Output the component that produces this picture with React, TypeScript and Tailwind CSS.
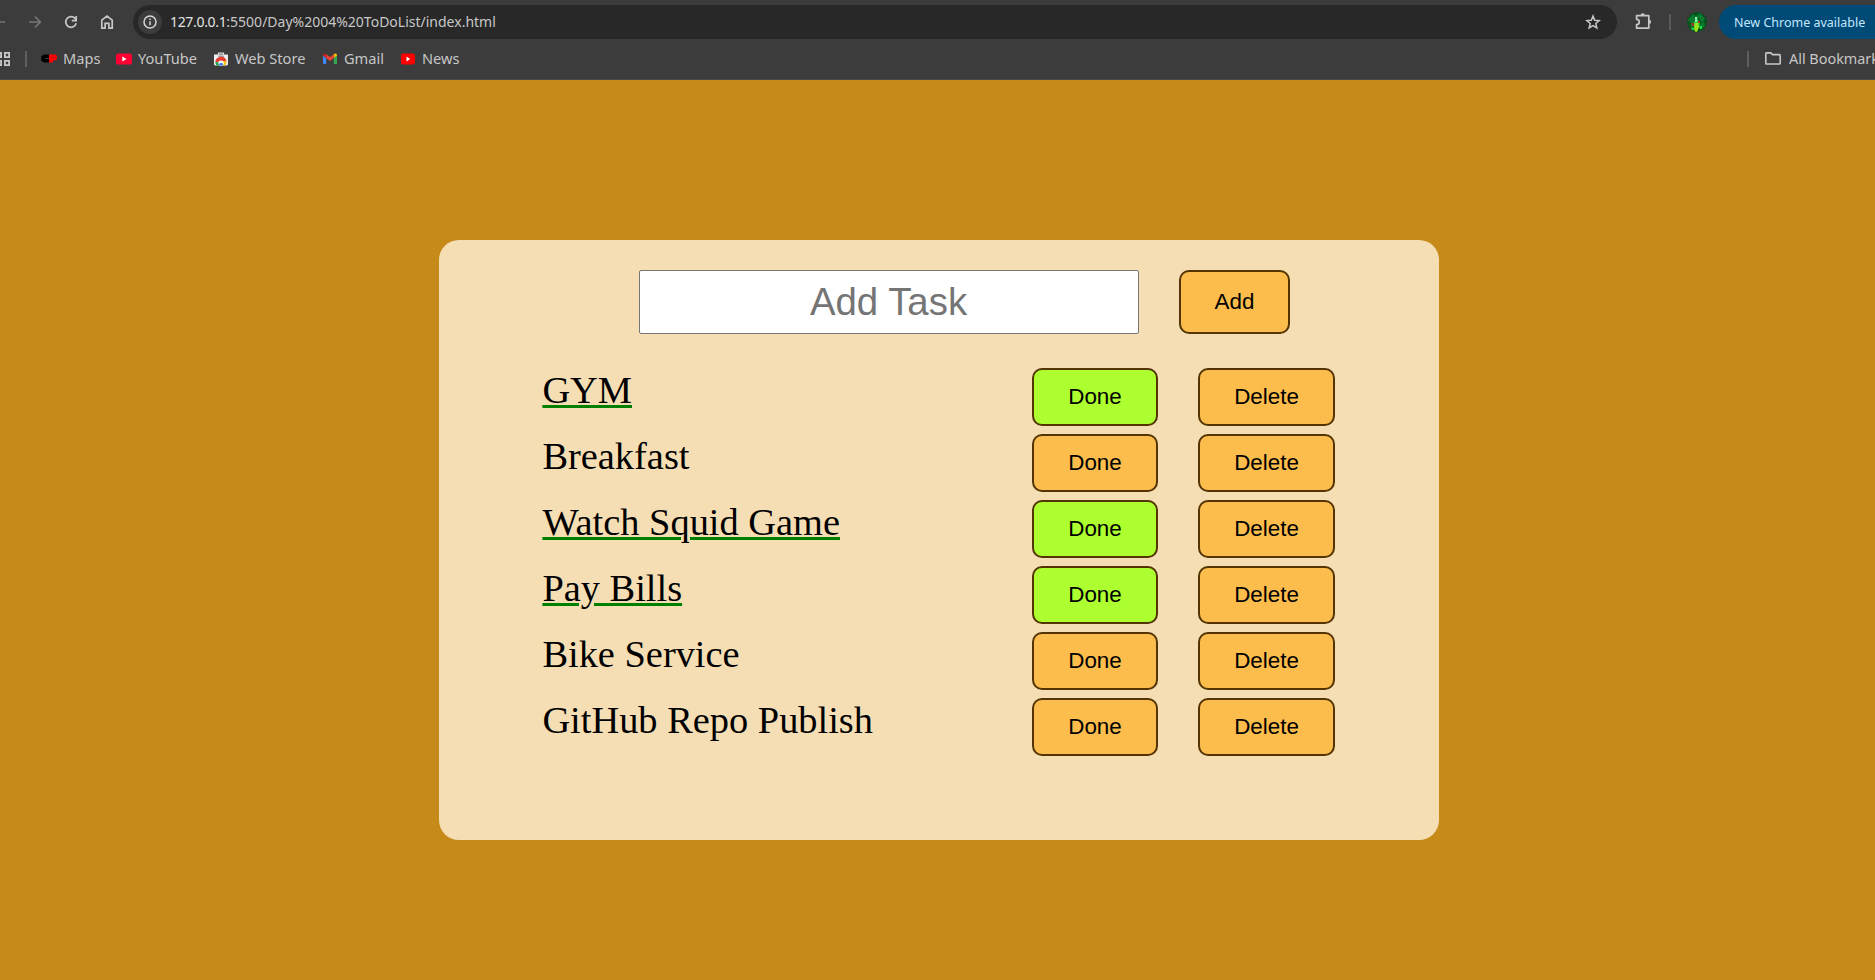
import type { ReactNode } from "react";

type Task = { title: string; done: boolean };

const tasks: Task[] = [
  { title: "GYM", done: true },
  { title: "Breakfast", done: false },
  { title: "Watch Squid Game", done: true },
  { title: "Pay Bills", done: true },
  { title: "Bike Service", done: false },
  { title: "GitHub Repo Publish", done: false },
];

function ArrowRight() {
  return (
    <svg width="14" height="14" viewBox="0 0 14 14" fill="none" stroke="#757575" strokeWidth="1.6">
      <path d="M1 7h11M7 1.6 12.4 7 7 12.4" />
    </svg>
  );
}

function ArrowLeft() {
  return (
    <svg width="14" height="14" viewBox="0 0 14 14" fill="none" stroke="#757575" strokeWidth="1.6">
      <path d="M13 7H2M7 1.6 1.6 7 7 12.4" />
    </svg>
  );
}

function Reload() {
  return (
    <svg width="14" height="14" viewBox="0 0 14 14" fill="none" stroke="#c7c7c7" strokeWidth="1.7">
      <path d="M12.2 8.3A5.3 5.3 0 1 1 11 3.4L12.4 5" />
      <path d="M12.2 1v4.6H7.8" />
    </svg>
  );
}

function Home() {
  return (
    <svg width="14" height="16" viewBox="0 0 14 16" fill="none" stroke="#c7c7c7" strokeWidth="1.7">
      <path d="M1.8 14.2V6.1L7 2l5.2 4.1v8.1H8.9V9.3H5.1v4.9z" />
    </svg>
  );
}

function Info() {
  return (
    <svg width="14" height="14" viewBox="0 0 14 14" fill="none" stroke="#d6d6d6" strokeWidth="1.5">
      <circle cx="7" cy="7" r="6" />
      <path d="M7 6.2v4M7 3.6v1.5" />
    </svg>
  );
}

function Star() {
  return (
    <svg width="16" height="16" viewBox="0 0 16 16" fill="none" stroke="#c7c7c7" strokeWidth="1.5">
      <path d="m8 2 1.7 4.2 4.5.4-3.4 2.9 1 4.4L8 11.6l-3.8 2.3 1-4.4-3.4-2.9 4.5-.4z" />
    </svg>
  );
}

function Puzzle() {
  return (
    <svg width="17" height="17" viewBox="0 0 17 17" fill="none">
      <path
        d="M1.6 2.6h12.2v12.6H1.6v-3.5c3.6-.2 3.6-5.2 0-5.4z"
        stroke="#c7c7c7"
        strokeWidth="1.7"
        strokeLinejoin="round"
      />
      <path d="M5.6 2.4a2.1 2.1 0 0 1 4.2 0zM14 6.8a2.1 2.1 0 0 1 0 4.2z" fill="#c7c7c7" />
    </svg>
  );
}

function Avatar() {
  return (
    <svg width="20" height="20" viewBox="0 0 20 20">
      <defs>
        <clipPath id="avatar-clip">
          <circle cx="10" cy="10" r="10" />
        </clipPath>
      </defs>
      <g clipPath="url(#avatar-clip)">
        <rect width="20" height="20" fill="#06501c" />
        <path d="M1 8 6 2l3 2 4-3 5 6-3 4-3-5-4 2-3 4z" fill="#0a7a30" />
        <path d="m3 13 3-3 2 4-3 3zM13 12l4-2 1 4-4 3z" fill="#087a2b" />
        <path d="M8 5h2l1 3 2 3-1 4H7l-1-4 2-2z" fill="#27cf45" />
        <path d="M8 5h2v5H8z" fill="#8deaa8" />
        <path d="M4 11h3v3H5zM11 9h2v2h-2z" fill="#a43a1e" />
        <path d="M8 11h3l1 4-2 5H8l-1-4z" fill="#9be01a" />
        <path d="M4 16h3v2H5zM12 14h3v3h-2z" fill="#19df42" />
      </g>
    </svg>
  );
}

function AppsGrid() {
  return (
    <svg width="14" height="14" viewBox="0 0 14 14" fill="none" stroke="#c7c7c7" strokeWidth="1.8">
      <path d="M.9.9h4.2v4.2H.9zM8.9.9h4.2v4.2H8.9zM.9 8.9h4.2v4.2H.9zM8.9 8.9h4.2v4.2H8.9z" />
    </svg>
  );
}

function CpIcon() {
  return (
    <svg width="16" height="9" viewBox="0 0 16 9">
      <path d="M3 .5h5v8H3L.3 6.7V2.3z" fill="#000" />
      <path d="M4.5 4h3.5v1H4.5z" fill="#3c3c3c" />
      <path d="M8 .5h6.7L16 2v3l-1.3 1.3H12v2.2H8z" fill="#f00" />
      <path d="M11.5 3H14v.8h-2.5z" fill="#8a1f1f" />
    </svg>
  );
}

function YouTube({ color, size }: { color: string; size: number }) {
  return (
    <svg width={size} height="12" viewBox="0 0 16 12" preserveAspectRatio="none">
      <rect y=".5" width="16" height="11" rx="2.6" fill={color} />
      <path d="M6.3 3.6v4.8L10.5 6z" fill="#fff" />
    </svg>
  );
}

function WebStore() {
  return (
    <svg width="14" height="14" viewBox="0 0 14 14">
      <path d="M4.5 3V1.2h5V3" fill="none" stroke="#d8dadd" strokeWidth="1.2" />
      <path d="M0 2.6h14V12a1.6 1.6 0 0 1-1.6 1.6H1.6A1.6 1.6 0 0 1 0 12z" fill="#eceef0" />
      <rect x="4" y="3.6" width="6" height="1.3" rx=".6" fill="#9a9da1" />
      <path d="M1.3 10.5a5.7 5.7 0 0 1 11.2-1.4H7z" fill="#e8382c" />
      <path d="M1.3 10.2 5 10l2.2 3.6H2.6a6 6 0 0 1-1.3-3.4z" fill="#22a350" />
      <path d="M8 9.1h4.5q.5 2.5-1.3 4.5H7z" fill="#fbc116" />
      <circle cx="7.1" cy="11.2" r="2.6" fill="#fff" />
      <path d="M5.1 13.6a2.1 2.1 0 1 1 4 0z" fill="#3b7ded" />
    </svg>
  );
}

function Gmail() {
  return (
    <svg width="14" height="11" viewBox="0 0 14 11">
      <path d="M0 2.5 3.2 5v6H1a1 1 0 0 1-1-1z" fill="#4285f4" />
      <path d="M14 2.5 10.8 5v6H13a1 1 0 0 0 1-1z" fill="#34a853" />
      <path d="M3.2 1.2 7 4.1l3.8-2.9V5L7 7.9 3.2 5z" fill="#ea4335" />
      <path d="M10.8 1.2C12.2 0 14 .6 14 2.4L10.8 5z" fill="#fbbc04" />
      <path d="M3.2 1.2C1.8 0 0 .6 0 2.4L3.2 5z" fill="#c5221f" />
    </svg>
  );
}

function Folder() {
  return (
    <svg
      className="shrink-0"
      width="16"
      height="13"
      viewBox="0 0 16 13"
      fill="none"
      stroke="#c7c7c7"
      strokeWidth="1.6"
    >
      <path d="M1.6.9h4.2l1.7 1.7h6.9q.8 0 .8.8v7.8q0 .8-.8.8H1.6q-.8 0-.8-.8V1.7q0-.8.8-.8z" />
    </svg>
  );
}

function Bookmark({ icon, label, className }: { icon: ReactNode; label: string; className: string }) {
  return (
    <a className={`flex shrink-0 items-center ${className}`}>
      <span className="flex w-4 shrink-0 justify-center">{icon}</span>
      <span className="ml-1.5 whitespace-nowrap pb-px">{label}</span>
    </a>
  );
}

function BrowserBar() {
  return (
    <header className="h-20 w-full overflow-hidden border-b border-[#484848] bg-[#3c3c3c] font-['Noto_Sans',sans-serif] text-[#c7c7c7]">
      <div className="flex h-11 items-center">
        <div className="-ml-2 w-3.5 shrink-0"><ArrowLeft /></div>
        <div className="ml-[22px] w-3.5 shrink-0"><ArrowRight /></div>
        <div className="ml-[22px] w-3.5 shrink-0"><Reload /></div>
        <div className="ml-[22px] w-3.5 shrink-0"><Home /></div>
        <div className="ml-[19px] flex h-[34px] w-[1484px] shrink-0 items-center rounded-full bg-[#282828] pl-[5px] pr-4">
          <span className="flex size-6 items-center justify-center rounded-full bg-[#3c3c3c]">
            <Info />
          </span>
          <span className="ml-2 grow text-sm">
            <span className="tracking-[-0.33px] text-[#e3e3e3]">127.0.0.1</span>
            :5500/Day%2004%20ToDoList/index.html
          </span>
          <Star />
        </div>
        <div className="ml-[18px] w-[17px] shrink-0 pb-px"><Puzzle /></div>
        <div className="ml-[17px] h-4 w-0.5 shrink-0 bg-[#5a5a5a]" />
        <div className="ml-4 w-5 shrink-0"><Avatar /></div>
        <div className="ml-3 flex h-[34px] w-[190px] shrink-0 items-center whitespace-nowrap rounded-l-full bg-[#004a77] pl-[15px] pt-0.5 text-[12.5px] text-[#c2e7ff]">
          New Chrome available
        </div>
      </div>
      <nav className="flex h-[30px] items-center text-[14.6px]">
        <div className="-ml-1 w-3.5 shrink-0"><AppsGrid /></div>
        <div className="ml-[15px] h-4 w-0.5 shrink-0 bg-[#5e5e5e]" />
        <Bookmark className="ml-3.5 w-[75px]" icon={<CpIcon />} label="Maps" />
        <Bookmark className="w-[97px]" icon={<YouTube color="#ff0033" size={16} />} label="YouTube" />
        <Bookmark className="w-[109px]" icon={<WebStore />} label="Web Store" />
        <Bookmark className="w-[78px]" icon={<Gmail />} label="Gmail" />
        <Bookmark className="w-[60px]" icon={<YouTube color="#ff0000" size={14} />} label="News" />
        <div className="ml-auto h-4 w-0.5 shrink-0 bg-[#5e5e5e]" />
        <div className="ml-4 flex w-[110px] shrink-0 items-center gap-2 whitespace-nowrap">
          <Folder />
          <span className="pb-px text-[14.4px]">All Bookmarks</span>
        </div>
      </nav>
    </header>
  );
}

const buttonBase = "shrink-0 rounded-[10px] border-2 border-[#533402] text-[22.4px] text-black";

function TaskRow({ title, done }: Task) {
  return (
    <li className="flex h-[58px]">
      <div className="grow pl-[0.4px] font-['Liberation_Serif',serif] text-[38.4px] leading-[44px] text-black">
        <span className={done ? "underline decoration-[green] decoration-[3px]" : ""}>{title}</span>
      </div>
      <button className={`${buttonBase} w-[126px] ${done ? "bg-[#adff2f]" : "bg-[#fcbd4c]"}`}>Done</button>
      <button className={`${buttonBase} ml-10 w-[137px] bg-[#fcbd4c]`}>Delete</button>
    </li>
  );
}

export default function App() {
  return (
    <div className="flex h-[980px] w-full flex-col overflow-hidden bg-[#c68a1a] font-['Liberation_Sans',sans-serif]">
      <BrowserBar />
      <main className="ml-[439px] mt-40 h-[600px] w-[1000px] rounded-[20px] bg-[#f5deb3] pt-[30px]">
        <div className="ml-[200px] flex h-16 gap-10">
          <input
            className="w-[500px] rounded-[2px] border border-[#767676] bg-white pr-px text-center text-[38.4px] placeholder:text-[#757575]"
            placeholder="Add Task"
          />
          <button className={`${buttonBase} w-[111px] bg-[#fcbd4c]`}>Add</button>
        </div>
        <ul className="ml-[103px] mt-[34px] flex w-[793px] flex-col gap-2">
          {tasks.map((task) => (
            <TaskRow key={task.title} {...task} />
          ))}
        </ul>
      </main>
    </div>
  );
}
